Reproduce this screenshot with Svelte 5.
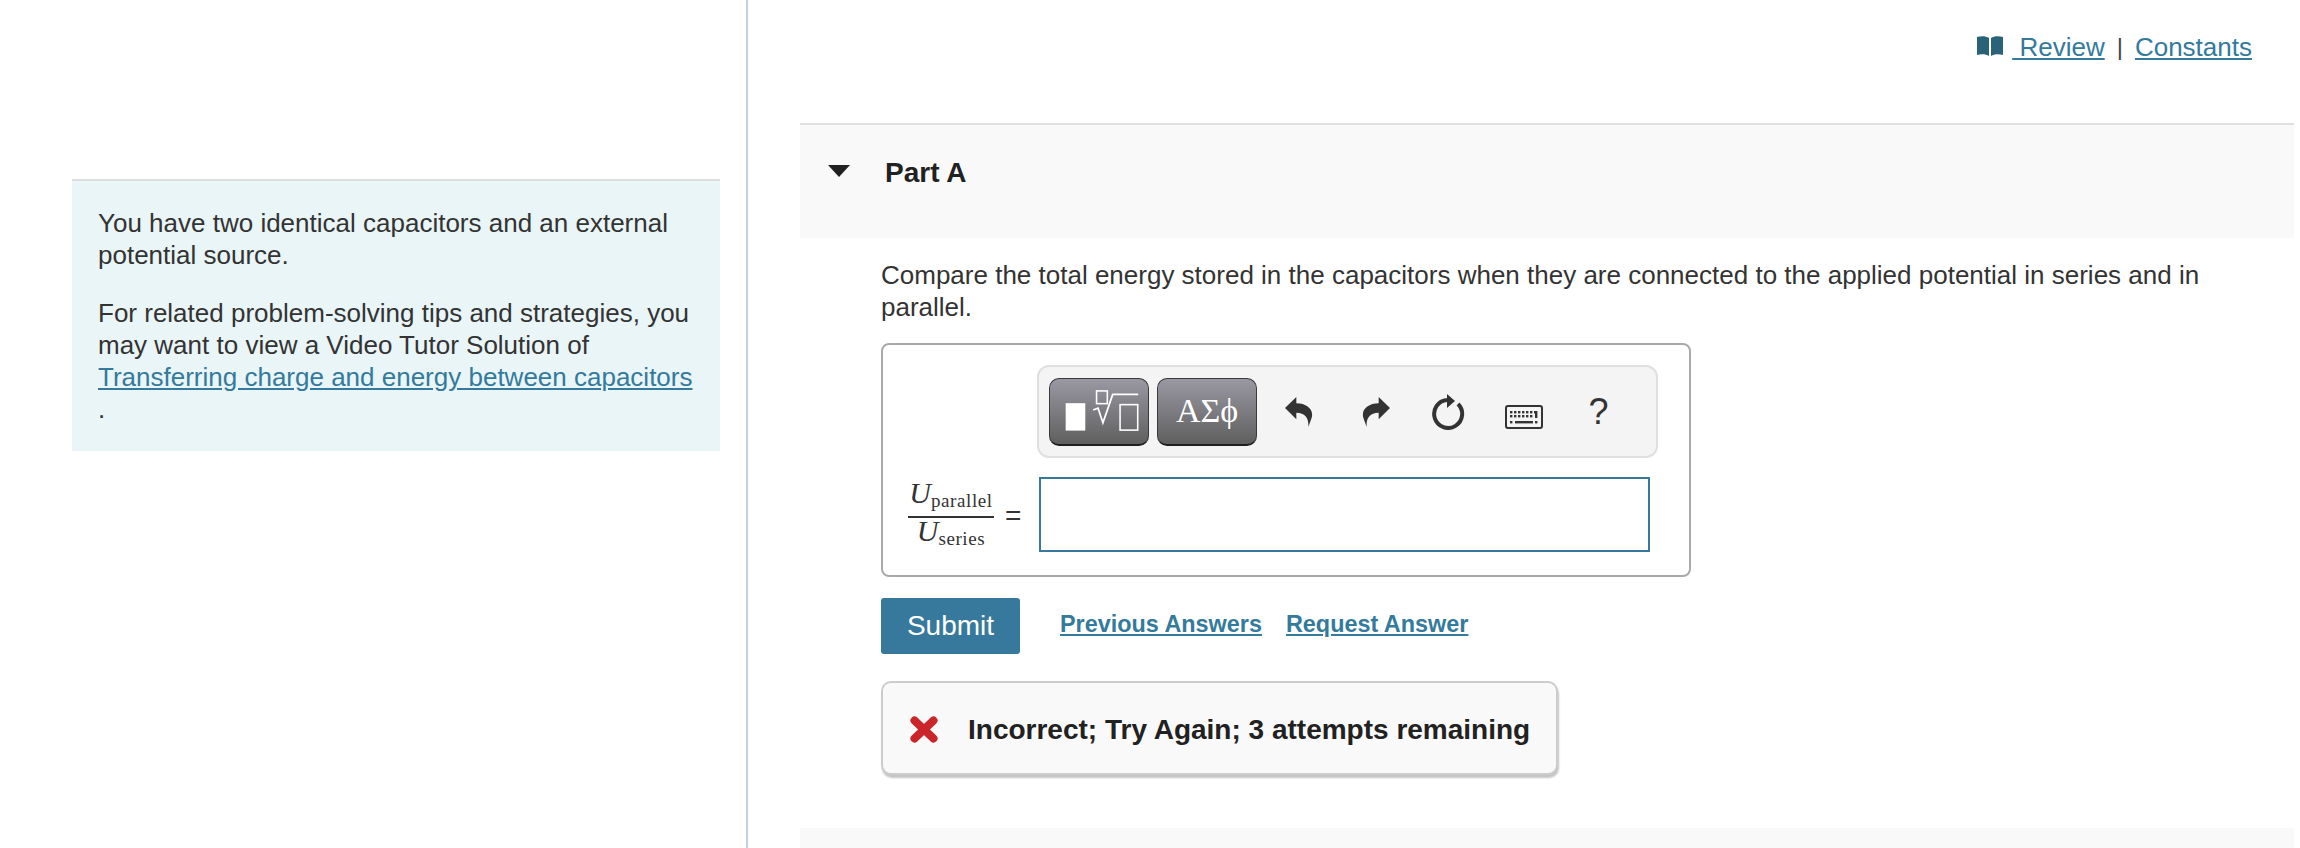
<script>
  const keyRows = [
    { y: 6, xs: [5, 9, 13, 17, 21, 25, 29] },
    { y: 10, xs: [5, 9, 13, 17, 21, 25] },
    { y: 16, xs: [5, 30] }
  ];
</script>

{#snippet arrow()}
  <svg class="arrow" viewBox="78 62 84 96" width="28" height="32">
    <path d="M78 98 L112 65 L112 84 C145 84 167 105 157 130 L148 155 C150 130 140 112 112 112 L112 132 Z" fill="#333" />
  </svg>
{/snippet}

<div class="page">
  <aside class="left">
    <div class="intro">
      <p>You have two identical capacitors and an external potential source.</p>
      <p>For related problem-solving tips and strategies, you may want to view a Video Tutor Solution of <a class="solution" href="#video">Transferring charge and energy between capacitors</a>.</p>
    </div>
  </aside>

  <main class="right">
    <div class="toplinks">
      <svg class="book" viewBox="0 0 26 21" width="26" height="21">
        <path d="M0 1 C4 0 9 0 12 2 V20 C9 18 4 18 0 19 Z" fill="#2a627a" />
        <path d="M26 1 C22 0 17 0 14 2 V20 C17 18 22 18 26 19 Z" fill="#2a627a" />
      </svg>
      <a href="#review">&nbsp;Review</a>
      <span class="sep">|</span>
      <a href="#constants">Constants</a>
    </div>

    <section class="part-head">
      <span class="caret"></span>
      <h2>Part A</h2>
    </section>

    <section class="part-body">
      <p class="question">Compare the total energy stored in the capacitors when they are connected to the applied potential in series and in parallel.</p>

      <div class="answer">
        <div class="toolbar">
          <button class="tool" aria-label="Templates">
            <svg viewBox="0 0 100 68" width="100" height="68">
              <rect x="16" y="26" width="20" height="28" fill="#fff" />
              <rect x="47.5" y="13.5" width="11" height="13" fill="none" stroke="#fff" stroke-width="1.6" />
              <path d="M44 33 L49 31 L54 46 L64 17 H90" fill="none" stroke="#fff" stroke-width="1.8" />
              <rect x="71.5" y="27.5" width="18" height="26" fill="none" stroke="#fff" stroke-width="1.6" />
            </svg>
          </button>
          <button class="tool symbols">ΑΣϕ</button>
          <span class="icon">{@render arrow()}</span>
          <span class="icon flip">{@render arrow()}</span>
          <span class="icon">
            <svg viewBox="0 0 34 36" width="34" height="36">
              <path d="M26 10 A14 14 0 1 1 15 6" fill="none" stroke="#333" stroke-width="4" />
              <path d="M15 0 L23 7 L15 14 Z" fill="#333" />
            </svg>
          </span>
          <span class="icon kbd">
            <svg viewBox="0 0 38 24" width="38" height="24">
              <rect x="1" y="1" width="36" height="22" rx="2" fill="none" stroke="#333" stroke-width="2" />
              {#each keyRows as row}
                {#each row.xs as x}
                  <rect {x} y={row.y} width="2.4" height="2.4" fill="#333" />
                {/each}
              {/each}
              <rect x="10" y="16" width="18" height="2.4" fill="#333" />
              <rect x="30" y="6" width="2.4" height="7" fill="#333" />
            </svg>
          </span>
          <span class="icon help">?</span>
        </div>

        <div class="entry">
          <span class="fraction">
            <span class="num"><i>U</i><small>parallel</small></span>
            <span class="den"><i>U</i><small>series</small></span>
          </span>
          <span class="equals">=</span>
          <input class="field" type="text" aria-label="Answer" />
        </div>
      </div>

      <div class="actions">
        <button class="submit">Submit</button>
        <a href="#previous">Previous Answers</a>
        <a href="#request">Request Answer</a>
      </div>

      <div class="feedback">
        <svg viewBox="0 0 28 27" width="28" height="27">
          <path d="M4.5 4.5 L23.5 22.5 M23.5 4.5 L4.5 22.5" stroke="#c9252b" stroke-width="8" stroke-linecap="round" />
        </svg>
        <span>Incorrect; Try Again; 3 attempts remaining</span>
      </div>
    </section>

    <div class="next-part"></div>
  </main>
</div>

<style>
  :global(body) {
    margin: 0;
    background: #fff;
  }

  .page {
    display: flex;
    height: 848px;
    overflow: hidden;
    font-family: "Liberation Sans", Arial, sans-serif;
    font-size: 26px;
    line-height: 32px;
    color: #333;
  }

  a {
    color: #337a9c;
    text-decoration: underline;
  }

  p {
    margin: 0;
  }

  .left {
    box-sizing: border-box;
    width: 748px;
    flex: none;
    padding: 179px 0 0 72px;
    border-right: 2px solid #c3d0e0;
  }

  .intro {
    box-sizing: border-box;
    width: 648px;
    padding: 26px;
    background: #e9f5f7;
    border-top: 2px solid #dedede;
  }

  .intro p + p {
    margin-top: 26px;
  }

  .solution {
    display: block;
    white-space: nowrap;
  }

  .right {
    flex: 1;
    display: flex;
    flex-direction: column;
    padding: 0 6px 0 52px;
    min-width: 0;
  }

  .toplinks {
    height: 123px;
    box-sizing: border-box;
    padding: 31px 42px 0 0;
    display: flex;
    justify-content: flex-end;
    align-items: flex-start;
  }

  .book {
    margin: 5px 9px 0 0;
  }

  .sep {
    margin: 0 12px 0 12px;
    color: #444;
    font-size: 24px;
  }

  .part-head {
    box-sizing: border-box;
    height: 115px;
    flex: none;
    display: flex;
    align-items: flex-start;
    background: #f9f9f9;
    border-top: 2px solid #e0e0e0;
  }

  .caret {
    width: 0;
    height: 0;
    margin: 40px 0 0 28px;
    border-style: solid;
    border-width: 12px 11px 0 11px;
    border-color: #212121 transparent transparent transparent;
  }

  h2 {
    margin: 32px 0 0 35px;
    font-size: 28px;
    line-height: 32px;
    font-weight: 700;
    color: #212121;
  }

  .part-body {
    flex: 1;
    padding: 21px 60px 0 81px;
  }

  .answer {
    box-sizing: border-box;
    width: 810px;
    height: 234px;
    margin-top: 20px;
    padding: 20px 0 0 25px;
    border: 2px solid #aaa;
    border-radius: 8px;
  }

  .toolbar {
    box-sizing: border-box;
    display: flex;
    align-items: center;
    width: 621px;
    height: 93px;
    margin-left: 129px;
    padding-left: 10px;
    background: #f4f4f4;
    border: 2px solid #e0e0e0;
    border-radius: 12px;
  }

  .tool {
    box-sizing: border-box;
    width: 100px;
    height: 68px;
    padding: 0;
    margin-right: 8px;
    display: flex;
    align-items: center;
    justify-content: center;
    background: linear-gradient(#9a98a2, #5f5f5f);
    border: 1px solid #3a3a3a;
    border-bottom: 2px solid #1f1f1f;
    border-radius: 10px;
    color: #fff;
  }

  .symbols {
    margin-right: 4px;
    font-family: "Liberation Serif", "DejaVu Serif", serif;
    font-size: 34px;
  }

  .icon {
    box-sizing: border-box;
    width: 75px;
    flex: none;
    display: flex;
    justify-content: center;
    align-items: center;
    color: #333;
  }

  .flip {
    transform: scaleX(-1);
    padding-right: 5px;
  }

  .kbd {
    padding-top: 10px;
  }

  .help {
    font-size: 36px;
  }

  .entry {
    display: flex;
    align-items: flex-start;
    margin-top: 19px;
  }

  .fraction {
    display: flex;
    flex-direction: column;
    align-items: center;
    width: 86px;
    height: 75px;
    font-family: "Liberation Serif", serif;
    font-size: 30px;
  }

  .fraction small {
    font-size: 19px;
    line-height: 0;
    letter-spacing: 0.6px;
    position: relative;
    top: 4px;
  }

  .num {
    width: 100%;
    line-height: 32px;
    padding-bottom: 7px;
    text-align: center;
    border-bottom: 2px solid #333;
  }

  .den {
    line-height: 26px;
  }

  .equals {
    width: 45px;
    flex: none;
    padding: 23px 0 0 11px;
    box-sizing: border-box;
    font-size: 28px;
    line-height: 32px;
  }

  .field {
    box-sizing: border-box;
    width: 611px;
    height: 75px;
    padding: 0;
    background: #fff;
    border: 2px solid #36799c;
    border-radius: 0;
    outline: none;
  }

  .actions {
    display: flex;
    align-items: flex-start;
    margin-top: 21px;
    font-size: 23.4px;
    font-weight: 700;
    gap: 24px;
  }

  .actions a {
    margin-top: 10px;
  }

  .submit {
    width: 139px;
    height: 56px;
    margin-right: 16px;
    padding: 0;
    background: #36799c;
    border: none;
    border-radius: 3px;
    color: #fff;
    font-family: inherit;
    font-size: 28px;
  }

  .feedback {
    box-sizing: border-box;
    display: flex;
    width: fit-content;
    align-items: center;
    gap: 30px;
    height: 94px;
    margin-top: 27px;
    padding: 3px 26px 0 27px;
    background: #f9f9f9;
    border: 2px solid #ccc;
    border-radius: 10px;
    box-shadow: 1px 3px 2px #c4c4c4;
    font-size: 28px;
    font-weight: 700;
    color: #212121;
  }

  .next-part {
    height: 20px;
    flex: none;
    background: #f9f9f9;
  }
</style>
